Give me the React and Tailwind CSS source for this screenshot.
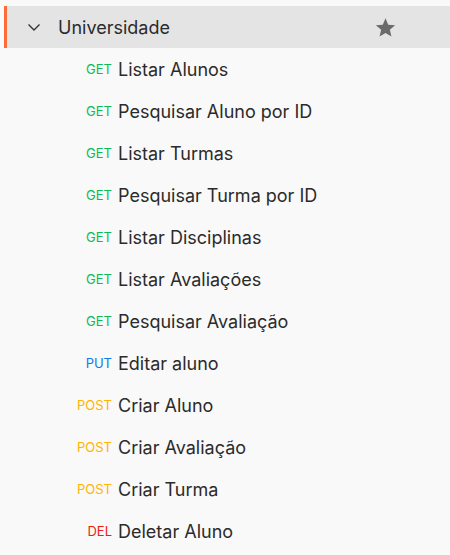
const requests = [
  { method: "GET", name: "Listar Alunos" },
  { method: "GET", name: "Pesquisar Aluno por ID" },
  { method: "GET", name: "Listar Turmas" },
  { method: "GET", name: "Pesquisar Turma por ID" },
  { method: "GET", name: "Listar Disciplinas" },
  { method: "GET", name: "Listar Avaliações" },
  { method: "GET", name: "Pesquisar Avaliação" },
  { method: "PUT", name: "Editar aluno" },
  { method: "POST", name: "Criar Aluno" },
  { method: "POST", name: "Criar Avaliação" },
  { method: "POST", name: "Criar Turma" },
  { method: "DEL", name: "Deletar Aluno" },
];

const methodColor = {
  GET: "text-[#0cbb52]",
  PUT: "text-[#097bed]",
  POST: "text-[#ffb400]",
  DEL: "text-[#eb2013]",
};

const App = () => {
  return (
    <div
      className="w-[450px] h-[555px] bg-[#f9f9f9] pt-[6px] overflow-hidden"
      style={{ fontFamily: "Inter, 'Noto Sans', sans-serif" }}
    >
      {/* collection header */}
      <div className="ml-[4px] h-[42px] flex items-center bg-[#e4e4e4] border-l-[3px] border-[#ff6c37]">
        <svg
          className="ml-[20px] w-[14px] h-[14px] text-[#333]"
          viewBox="0 0 14 14"
          fill="none"
          stroke="currentColor"
          strokeWidth="1.4"
        >
          <path d="M1.5 4.5 L7 10 L12.5 4.5" />
        </svg>
        <span className="ml-[17px] text-[18px] text-[#2b2b2b]">Universidade</span>
        <svg className="ml-auto mr-[54px] w-[21px] h-[21px]" viewBox="0 0 24 24" fill="#6b6b6b">
          <path d="M12 1.5 l3.1 7.3 7.9 0.6 -6 5.2 1.8 7.7 L12 18.2 5.2 22.3 7 14.6 1 9.4 l7.9-0.6z" />
        </svg>
      </div>

      {/* requests */}
      {requests.map((r) => (
        <div key={r.name} className="h-[42px] flex items-center pt-px">
          <span
            className={`w-[112px] text-right text-[13px] ${methodColor[r.method]}`}
          >
            {r.method}
          </span>
          <span className="ml-[6px] text-[18px] text-[#2b2b2b]">{r.name}</span>
        </div>
      ))}
    </div>
  );
};

export default App;
